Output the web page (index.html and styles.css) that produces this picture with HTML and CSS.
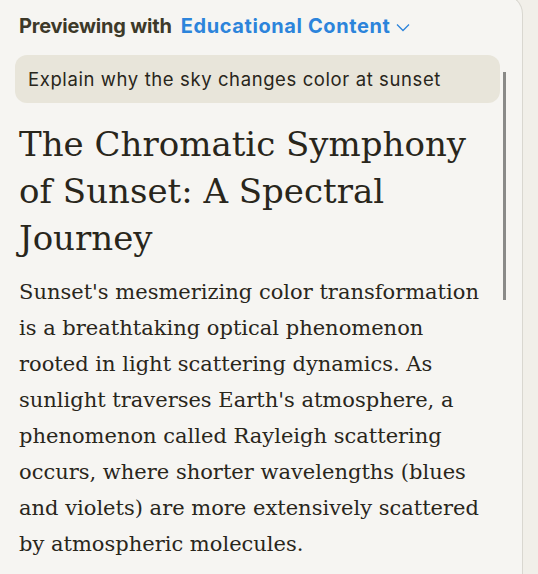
FILE: index.html
```html
<!DOCTYPE html>
<html>
<head>
<meta charset="utf-8">
<link rel="stylesheet" href="styles.css">
</head>
<body>
<div class="panel">
  <div class="header">
    <span class="label">Previewing with</span>
    <span class="picker">Educational Content
      <svg class="chev" width="14" height="9" viewBox="0 0 14 9"><path d="M1 1.5 L7 7.5 L13 1.5" fill="none" stroke="#2c84db" stroke-width="1.3"/></svg>
    </span>
  </div>
  <div class="content">
    <div class="scroll">
      <div class="prompt">Explain why the sky changes color at sunset</div>
      <h1 class="title">The Chromatic Symphony of Sunset: A Spectral Journey</h1>
      <p class="body">Sunset's mesmerizing color transformation is a breathtaking optical phenomenon rooted in light scattering dynamics. As sunlight traverses Earth's atmosphere, a phenomenon called Rayleigh scattering occurs, where shorter wavelengths (blues and violets) are more extensively scattered by atmospheric molecules.</p>
    </div>
    <div class="scrollbar"></div>
  </div>
</div>
</body>
</html>
```

FILE: styles.css
```css
html, body {
  margin: 0;
  padding: 0;
  background: #f1efe9;
  overflow: hidden;
}
.panel {
  width: 523px;
  height: 600px;
  margin-top: -6px;
  background: #f6f5f2;
  border-right: 1px solid #d9d7d0;
  border-top: 1px solid #d9d7d0;
  border-top-right-radius: 20px;
  box-sizing: border-box;
}
.header {
  padding: 17px 0 0 19px;
  height: 28px;
  font-family: Inter, "Noto Sans", sans-serif;
  font-weight: 700;
  font-size: 20px;
  display: flex;
  align-items: center;
  gap: 9px;
}
.label { color: #3d3929; letter-spacing: -0.2px; }
.picker {
  color: #2c84db;
  display: flex;
  align-items: center;
  gap: 6px;
  letter-spacing: 0.6px;
}
.chev { margin-top: 3px; }
.content {
  display: flex;
  padding-left: 15px;
}
.scroll {
  width: 485px;
}
.prompt {
  margin-top: 15px;
  height: 48px;
  box-sizing: border-box;
  background: #e8e5da;
  border-radius: 12px;
  padding: 0 13px;
  display: flex;
  align-items: center;
  font-family: Inter, "Noto Sans", sans-serif;
  font-size: 18.5px;
  letter-spacing: 0.6px;
  color: #29261b;
}
.title {
  margin: 18px 0 0 4px;
  font-family: "DejaVu Serif", serif;
  font-weight: 400;
  font-size: 34px;
  line-height: 47px;
  color: #29261b;
}
.body {
  margin: 12px 0 0 4px;
  max-width: 472px;
  font-family: "DejaVu Serif", serif;
  font-size: 21px;
  line-height: 36px;
  color: #29261b;
}
.scrollbar {
  width: 3px;
  height: 228px;
  margin: 32px 0 0 3px;
  background: #8a8a88;
}
```
